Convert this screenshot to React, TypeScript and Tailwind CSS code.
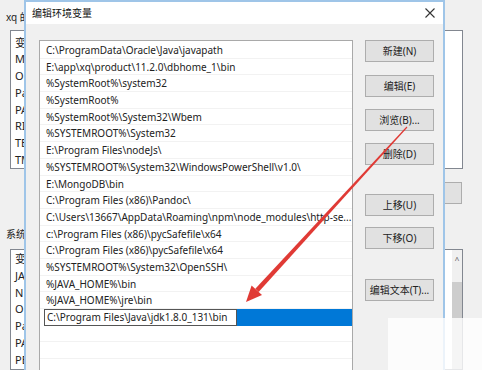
import React from "react";

const font = { fontFamily: '"Noto Sans", "Noto Sans CJK SC", sans-serif' };

const rows = [
  "C:\\ProgramData\\Oracle\\Java\\javapath",
  "E:\\app\\xq\\product\\11.2.0\\dbhome_1\\bin",
  "%SystemRoot%\\system32",
  "%SystemRoot%",
  "%SystemRoot%\\System32\\Wbem",
  "%SYSTEMROOT%\\System32",
  "E:\\Program Files\\nodeJs\\",
  "%SYSTEMROOT%\\System32\\WindowsPowerShell\\v1.0\\",
  "E:\\MongoDB\\bin",
  "C:\\Program Files (x86)\\Pandoc\\",
  "C:\\Users\\13667\\AppData\\Roaming\\npm\\node_modules\\http-se...",
  "c:\\Program Files (x86)\\pycSafefile\\x64",
  "C:\\Program Files (x86)\\pycSafefile\\x64",
  "%SYSTEMROOT%\\System32\\OpenSSH\\",
  "%JAVA_HOME%\\bin",
  "%JAVA_HOME%\\jre\\bin",
];

function Btn({ label, className = "" }: { label: string; className?: string }) {
  return (
    <div
      className={`w-[69px] h-[22px] flex items-center justify-center bg-[#e1e1e1] border border-[#adadad] text-[10px] text-[#222] ${className}`}
    >
      {label}
    </div>
  );
}

export default function App() {
  const bgTop = ["变", "M", "O", "Pa", "PA", "RI", "TE", "TM"];
  const bgBot = ["变", "JA", "N", "O", "Pa", "PA", "PE"];
  return (
    <div className="relative w-[500px] h-[370px] overflow-hidden bg-white" style={font}>
      {/* background window */}
      <div className="w-[482px] h-[370px] bg-[#f0f0f0] flex flex-col">
        <div className="h-[30px] pl-[6px] pt-[10px] text-[10px] text-[#222] leading-[14px] whitespace-nowrap">
          xq 的
        </div>
        <div className="ml-[10px] w-[453px] h-[140px] bg-white border border-[#828790] pt-[4px] pl-[4px]">
          {bgTop.map((t, i) => (
            <div key={i} className="h-[16.7px] leading-[16.7px] text-[11px] text-[#222]">{t}</div>
          ))}
        </div>
        <div className="h-[13px]" />
        <div className="flex justify-end pr-[20px]">
          <div className="w-[69px] h-[22px] bg-[#e1e1e1] border border-[#adadad]" />
        </div>
        <div className="h-[23px]" />
        <div className="pl-[6px] text-[10px] leading-[14px] text-[#222]">系统</div>
        <div className="h-[8px]" />
        <div className="ml-[10px] w-[453px] flex-1 bg-white border border-[#828790] flex">
          <div className="flex-1 pt-[1px] pl-[4px]">
            {bgBot.map((t, i) => (
              <div key={i} className="h-[16.9px] leading-[16.9px] text-[11px] text-[#222]">{t}</div>
            ))}
          </div>
          <div className="w-[10px] bg-[#f0f0f0] flex flex-col">
            <div className="h-[20px] flex items-center justify-center text-[8px] text-[#555]">^</div>
            <div className="h-[12px]" />
            <div className="flex-1 bg-[#cdcdcd]" />
          </div>
        </div>
      </div>

      {/* dialog */}
      <div className="absolute left-[24px] top-0 w-[421px] h-[380px] border-2 border-[#9fc5e8] border-b-0 bg-[#f0f0f0] flex flex-col">
        <div className="h-[25px] bg-white flex items-center justify-between pl-[6px] pr-[6px]">
          <span className="text-[10px] text-[#111] leading-none">编辑环境变量</span>
          <svg width="12" height="12" viewBox="0 0 12 12" className="mr-[1px]">
            <path d="M1.5 1.5 L10.5 10.5 M10.5 1.5 L1.5 10.5" stroke="#333" strokeWidth="1.1" />
          </svg>
        </div>
        <div className="flex pt-[16px] pl-[13px]">
          <div className="w-[314px] h-[340px] bg-white border border-[#a9a9a9] pt-[1px]">
            {rows.map((r, i) => (
              <div
                key={i}
                className="h-[16.7px] leading-[16.7px] pl-[6px] text-[10px] text-[#222] border-b border-[#f2f2f2] whitespace-nowrap overflow-hidden"
              >
                {r}
              </div>
            ))}
            <div className="h-[16.7px] flex">
              <div className="ml-[4px] w-[193px] h-full border border-[#555] bg-white pl-[2px] leading-[14.7px] text-[10px] text-[#222] whitespace-nowrap">
                C:\Program Files\Java\jdk1.8.0_131\bin
              </div>
              <div className="flex-1 h-full bg-[#0078d7]" />
            </div>
            {[0, 1, 2].map((i) => (
              <div key={i} className="h-[16.7px] border-b border-[#f2f2f2]" />
            ))}
          </div>
          <div className="ml-[12px] flex flex-col">
            <Btn label="新建(N)" className="mt-[0px]" />
            <Btn label="编辑(E)" className="mt-[13px]" />
            <Btn label="浏览(B)..." className="mt-[12px]" />
            <Btn label="删除(D)" className="mt-[12px]" />
            <Btn label="上移(U)" className="mt-[29px]" />
            <Btn label="下移(O)" className="mt-[11px]" />
            <Btn label="编辑文本(T)..." className="mt-[30px]" />
          </div>
        </div>
      </div>

      {/* red arrow annotation */}
      <svg className="absolute left-0 top-0" width="500" height="370" viewBox="0 0 500 370">
        <polygon
          points="407.4,127.4 406.6,126.6 255.3,288.8 258.6,291.9"
          fill="#e03a35"
        />
        <polygon points="246,302 251.6,285.5 262,295" fill="#e03a35" />
      </svg>

      {/* watermark area */}
      <div className="absolute left-[388px] top-[318px] w-[112px] h-[52px] bg-white/80" />
    </div>
  );
}
